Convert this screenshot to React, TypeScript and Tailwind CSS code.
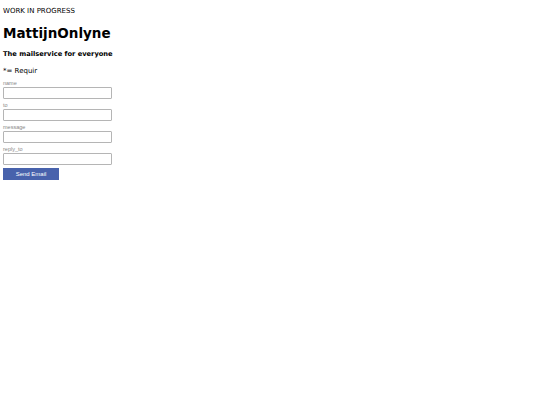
import React from "react";

const fields = ["name", "to", "message", "reply_to"];

export default function App() {
  return (
    <div className="min-h-[405px] bg-white px-[3px] pt-[6px] text-black">
      <p className="font-['DejaVu_Sans',sans-serif] text-[7px] leading-[10px]">WORK IN PROGRESS</p>
      <h1 className="mt-[9px] font-['DejaVu_Sans',sans-serif] text-[13.5px] font-bold leading-[16px]">
        MattijnOnlyne
      </h1>
      <h3 className="mt-[9px] font-['DejaVu_Sans',sans-serif] text-[6.7px] font-bold leading-[9px]">
        The mailservice for everyone
      </h3>
      <p className="mt-[7px] font-['DejaVu_Sans',sans-serif] text-[7px] leading-[10px]">*= Requir</p>
      <form className="mt-[4px] flex flex-col font-['Liberation_Sans',Arial,sans-serif]">
        {fields.map((f) => (
          <label key={f} className="mb-[3px] flex flex-col">
            <span className="text-[5.5px] leading-[7px] text-[#888]">{f}</span>
            <input
              type="text"
              className="h-[12px] w-[109px] rounded-[1px] border border-[#b5b5b5] bg-white"
            />
          </label>
        ))}
        <button
          type="button"
          className="h-[12px] w-[56px] bg-[#4862ac] text-[6px] leading-[12px] text-white"
        >
          Send Email
        </button>
      </form>
    </div>
  );
}
